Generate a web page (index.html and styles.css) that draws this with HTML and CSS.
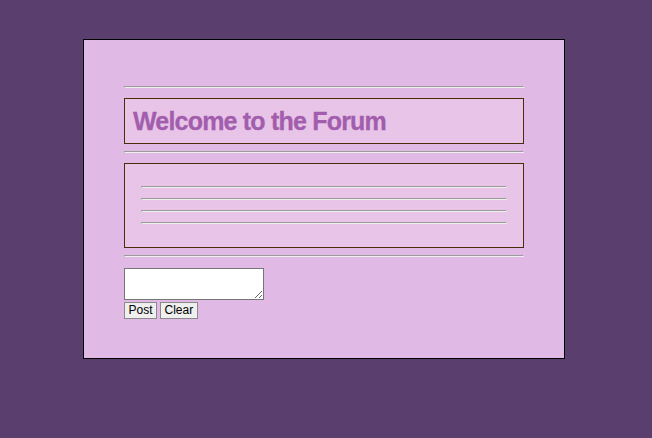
FILE: index.html
```html
<!DOCTYPE html>
<html>
<head>
<meta charset="utf-8">
<title>Forum</title>
<link rel="stylesheet" href="styles.css">
</head>
<body>
<div class="page">
  <hr class="rule">
  <div class="panel header">
    <h1 class="title">Welcome to the Forum</h1>
  </div>
  <hr class="rule">
  <div class="panel posts">
    <hr class="post-rule">
    <hr class="post-rule">
    <hr class="post-rule">
    <hr class="post-rule">
  </div>
  <hr class="rule">
  <form class="composer">
    <textarea class="message"></textarea>
    <div class="actions">
      <button type="button" class="btn">Post</button>
      <button type="reset" class="btn">Clear</button>
    </div>
  </form>
</div>
</body>
</html>
```
FILE: styles.css
```css
html, body {
  margin: 0;
  padding: 0;
}
body {
  background: #5a3e6e;
  padding: 39px 0 0 83px;
  font-family: "Liberation Sans", Arial, sans-serif;
  height: 438px;
  box-sizing: border-box;
}
.page {
  width: 400px;
  height: 279px;
  padding: 39px 40px 0 40px;
  background: #e1b9e5;
  border: 1px solid #000;
}
.rule,
.post-rule {
  height: 0;
  border-top: 1px solid #9a9a9a;
  border-left: 1px solid #9a9a9a;
  border-bottom: 1px solid #eeeeee;
  border-right: 1px solid #eeeeee;
}
.rule {
  margin: 7px 0 10px 0;
}
.panel {
  background: #e8c5e8;
  border: 1px solid #4b2e08;
}
.header {
  padding: 8px 8px 7px 8px;
}
.title {
  margin: 0;
  font-size: 25px;
  line-height: 29px;
  font-weight: bold;
  letter-spacing: -0.8px;
  color: #a25dad;
  -webkit-text-stroke: 0.3px #a25dad;
}
.posts {
  display: flex;
  flex-direction: column;
  gap: 10px;
  padding: 22px 16px 23px 16px;
}
.post-rule {
  margin: 0;
}
.composer {
  margin: 0;
  padding-top: 1px;
}
.message {
  display: block;
  width: 140px;
  height: 32px;
  box-sizing: border-box;
  margin: 0;
  border: 1px solid #767676;
  background: #fff;
}
.actions {
  display: flex;
  gap: 3px;
  margin-top: 2px;
}
.btn {
  font-family: "Liberation Sans", Arial, sans-serif;
  font-size: 12px;
  line-height: 15px;
  height: 17px;
  padding: 0 3.5px;
  margin: 0;
  border: 1px solid #8a8a8a;
  border-radius: 0;
  background: #efefef;
  color: #000;
}
```
